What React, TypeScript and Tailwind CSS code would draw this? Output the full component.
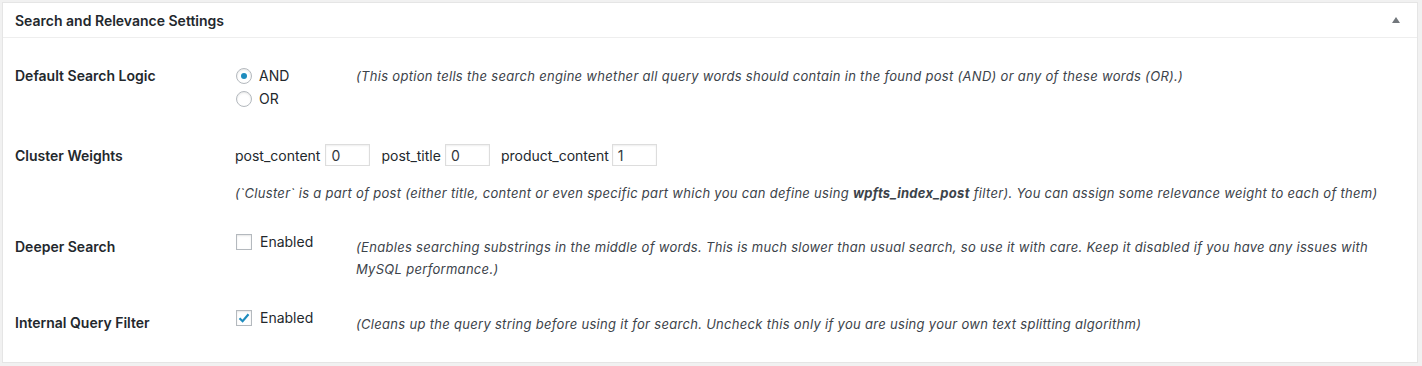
import React from "react";

const font = { fontFamily: "Inter, 'Noto Sans', 'Liberation Sans', sans-serif" };

function Radio({ checked }: { checked?: boolean }) {
  return (
    <span className="inline-flex h-[16px] w-[16px] items-center justify-center rounded-full border border-[#b4b9be] bg-white shadow-[inset_0_1px_2px_rgba(0,0,0,0.1)]">
      {checked && <span className="h-[6px] w-[6px] rounded-full bg-[#1e8cbe]" />}
    </span>
  );
}

function Checkbox({ checked }: { checked?: boolean }) {
  return (
    <span className="inline-flex h-[16px] w-[16px] items-center justify-center border border-[#b4b9be] bg-white shadow-[inset_0_1px_2px_rgba(0,0,0,0.1)]">
      {checked && (
        <svg width="14" height="14" viewBox="0 0 14 14">
          <path d="M2.5 7.2 L5.6 10.2 L11.5 3.3" fill="none" stroke="#1e8cbe" strokeWidth="2.2" />
        </svg>
      )}
    </span>
  );
}

function Input({ value }: { value: string }) {
  return (
    <span className="inline-flex h-[22px] w-[45px] items-center border border-[#ddd] bg-white px-[5px] text-[14px] text-[#32373c] shadow-[inset_0_1px_2px_rgba(0,0,0,0.07)]">
      {value}
    </span>
  );
}

export default function App() {
  return (
    <div className="h-[366px] w-[1422px] bg-[#f1f1f1] pl-[2px] pt-[2px]" style={font}>
      <div className="h-[361px] w-[1416px] border border-[#e5e5e5] bg-white text-[#23282d]">
        <div className="flex h-[35px] items-center justify-between border-b border-[#eee] pl-[12px] pr-[15px]">
          <span className="text-[14px] font-semibold">Search and Relevance Settings</span>
          <svg width="10" height="8" viewBox="0 0 10 8" className="mr-[1px]">
            <path d="M1 7 L5 1 L9 7 Z" fill="#72777c" />
          </svg>
        </div>

        <div className="pl-[12px] text-[14px]">
          {/* Row 1 */}
          <div className="mt-[26px] flex">
            <div className="mt-[1px] w-[220px] font-semibold leading-[22px]">Default Search Logic</div>
            <div className="w-[121px]">
              <div className="flex h-[23px] items-center gap-[7px] pl-[1px]">
                <Radio checked />
                <span>AND</span>
              </div>
              <div className="flex h-[23px] items-center gap-[7px] pl-[1px]">
                <Radio />
                <span>OR</span>
              </div>
            </div>
            <div className="mt-[1px] text-[13px] italic leading-[22px] tracking-[0.3px] text-[#3c434a]">
              (This option tells the search engine whether all query words should contain in the found post (AND) or any of these words (OR).)
            </div>
          </div>

          {/* Row 2 */}
          <div className="mt-[34px] flex">
            <div className="mt-[1px] w-[220px] font-semibold leading-[22px]">Cluster Weights</div>
            <div>
              <div className="flex h-[22px] items-center">
                <span className="mr-[5px]">post_content</span>
                <Input value="0" />
                <span className="ml-[11px] mr-[4px]">post_title</span>
                <Input value="0" />
                <span className="ml-[11px] mr-[3px]">product_content</span>
                <Input value="1" />
              </div>
              <div className="mt-[16px] text-[13px] italic leading-[22px] tracking-[0.3px] text-[#3c434a]">
                (`Cluster` is a part of post (either title, content or even specific part which you can define using <b>wpfts_index_post</b> filter). You can assign some relevance weight to each of them)
              </div>
            </div>
          </div>

          {/* Row 3 */}
          <div className="mt-[32px] flex">
            <div className="w-[220px] font-semibold leading-[22px]">Deeper Search</div>
            <div className="-mt-[2px] flex w-[121px] items-center gap-[8px] self-start pl-[1px] leading-[16px]">
              <Checkbox />
              <span>Enabled</span>
            </div>
            <div className="w-[1030px] text-[13px] italic leading-[22px] tracking-[0.3px] text-[#3c434a]">
              (Enables searching substrings in the middle of words. This is much slower than usual search, so use it with care. Keep it disabled if you have any issues with MySQL performance.)
            </div>
          </div>

          {/* Row 4 */}
          <div className="mt-[32px] flex">
            <div className="w-[220px] font-semibold leading-[22px]">Internal Query Filter</div>
            <div className="-mt-[2px] flex w-[121px] items-center gap-[8px] self-start pl-[1px] leading-[16px]">
              <Checkbox checked />
              <span>Enabled</span>
            </div>
            <div className="mt-[1px] text-[13px] italic leading-[22px] tracking-[0.3px] text-[#3c434a]">
              (Cleans up the query string before using it for search. Uncheck this only if you are using your own text splitting algorithm)
            </div>
          </div>
        </div>
      </div>
    </div>
  );
}
